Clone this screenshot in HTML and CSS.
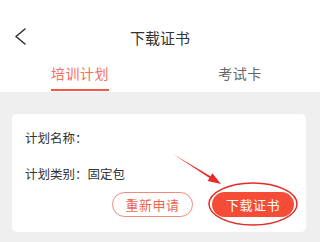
FILE: index.html
```html
<!DOCTYPE html>
<html lang="zh">
<head>
<meta charset="utf-8">
<link rel="stylesheet" href="styles.css">
</head>
<body>
<div class="page">
  <div class="top">
    <div class="nav">
      <svg class="back" width="14" height="20" viewBox="0 0 14 20"><polyline points="11,2 2,9.5 11,17" fill="none" stroke="#333" stroke-width="1.6" stroke-linecap="round" stroke-linejoin="round"/></svg>
      <span class="title">下载证书</span>
    </div>
    <div class="tabs">
      <div class="tab active"><span class="tab-label">培训计划</span></div>
      <div class="tab"><span class="tab-label">考试卡</span></div>
    </div>
  </div>
  <div class="body">
    <div class="card">
      <div class="row row-name">计划名称：</div>
      <div class="row row-type">计划类别：固定包</div>
      <div class="actions">
        <span class="btn btn-outline">重新申请</span>
        <span class="btn btn-fill">下载证书</span>
      </div>
    </div>
  </div>
  <svg class="annot" width="320" height="242" viewBox="0 0 320 242">
    <ellipse cx="253" cy="204" rx="44" ry="21" fill="none" stroke="#e42a26" stroke-width="1.5"/>
    <polygon points="173,154 210.5,176.3 212.4,173.3 221,184 207.6,180.9 209.5,178 " fill="#ea2a2b"/>
  </svg>
</div>
</body>
</html>
```
FILE: styles.css
```css
* { box-sizing: border-box; }
html, body { margin: 0; padding: 0; }
body {
  width: 320px;
  height: 242px;
  overflow: hidden;
  background: #efefef;
  font-family: "Noto Sans CJK SC", "Noto Sans", sans-serif;
}
.page { position: relative; width: 320px; height: 242px; }
.top { background: #fff; }
.nav {
  position: relative;
  height: 52px;
  padding-top: 24px;
  display: flex;
  justify-content: center;
}
.back { position: absolute; left: 14px; top: 27px; }
.title {
  font-size: 15px;
  line-height: 28px;
  height: 28px;
  color: #333;
}
.tabs { display: flex; height: 40px; }
.tab {
  flex: 1;
  display: flex;
  justify-content: center;
}
.tab-label {
  font-size: 14px;
  line-height: 20px;
  padding-top: 11px;
  height: 39px;
  color: #666;
  letter-spacing: 0.5px;
}
.tab.active .tab-label {
  color: #f4705a;
  border-bottom: 2px solid #f45843;
}
.body { padding: 22px 14px 0 12px; }
.card {
  background: #fff;
  border-radius: 5px;
  height: 118px;
  padding: 14px 12px 0 13px;
  display: flex;
  flex-direction: column;
}
.row {
  font-size: 12.5px;
  line-height: 20px;
  color: #333;
}
.row-type { margin-top: 16px; }
.actions {
  margin-top: 8px;
  display: flex;
  justify-content: flex-end;
  gap: 19px;
}
.btn {
  height: 25px;
  border-radius: 13px;
  font-size: 13px;
  line-height: 23px;
  display: flex;
  align-items: center;
  justify-content: center;
  letter-spacing: 0.5px;
}
.btn-outline {
  width: 81px;
  border: 1px solid #f28a7b;
  color: #ee6552;
}
.btn-fill {
  width: 82px;
  background: #f54c37;
  color: #fff;
}
.annot { position: absolute; left: 0; top: 0; pointer-events: none; }
```
